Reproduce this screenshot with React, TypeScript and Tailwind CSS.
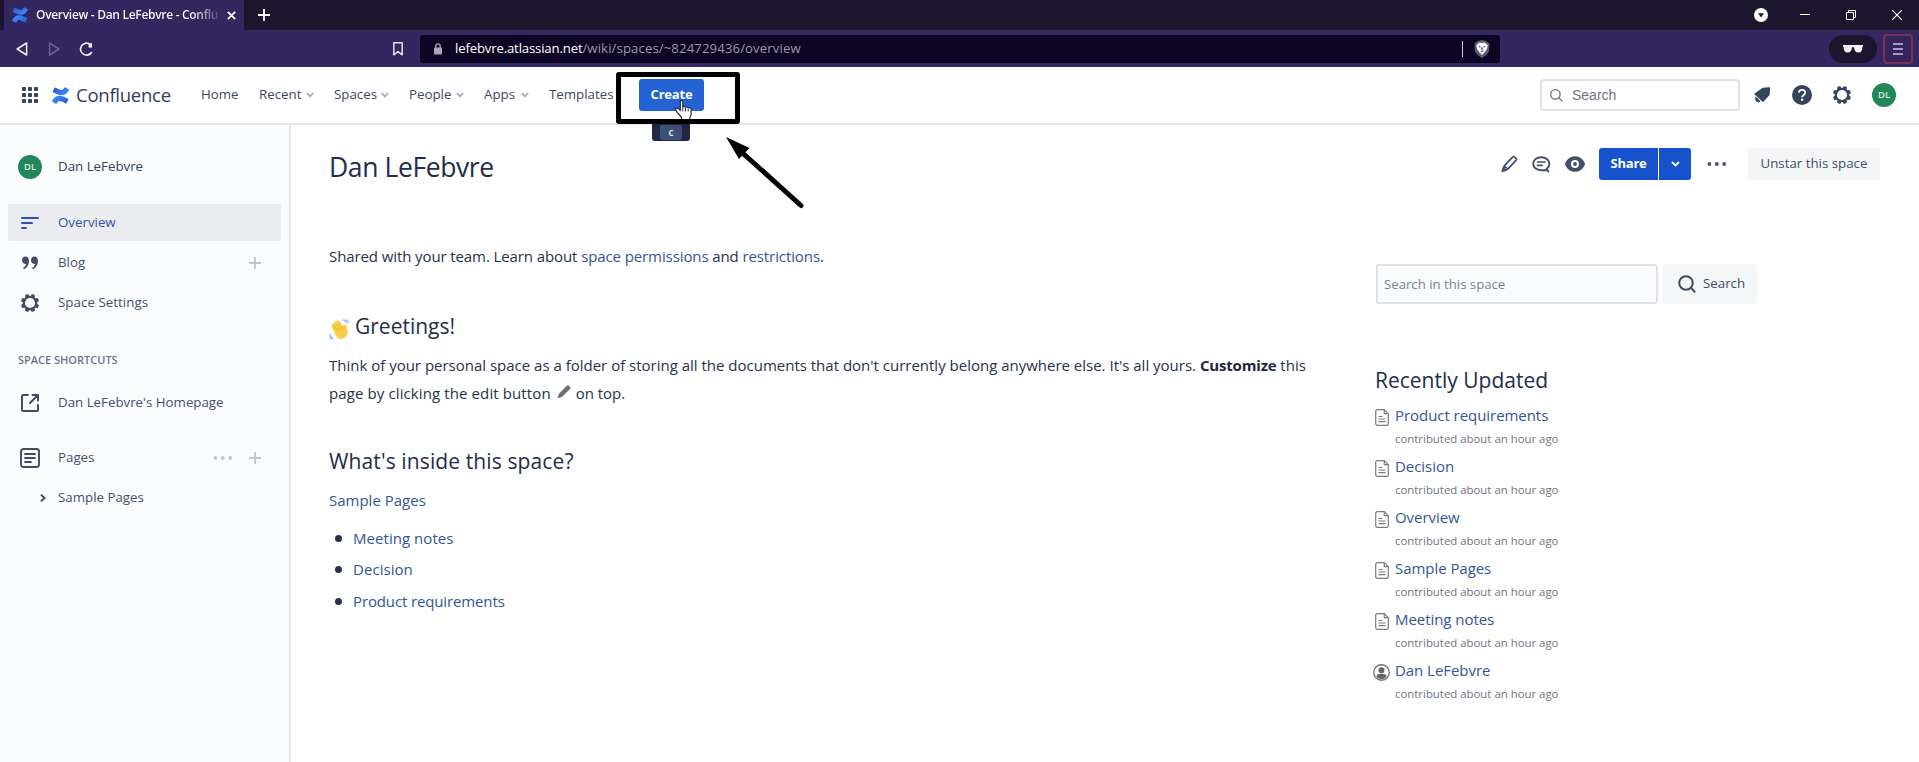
import React from "react";

const Logo = ({ id, size, className = "" }: { id: string; size: number; className?: string }) => (
  <svg width={size} height={size} viewBox="0 0 24 24" className={`shrink-0 ${className}`}>
    <defs>
      <linearGradient id={`${id}a`} x1="1" y1="1" x2="0.2" y2="0.3">
        <stop offset="0" stopColor="#1f57c4" />
        <stop offset="1" stopColor="#3c86f5" />
      </linearGradient>
      <linearGradient id={`${id}b`} x1="0" y1="0" x2="0.8" y2="0.7">
        <stop offset="0" stopColor="#1f57c4" />
        <stop offset="1" stopColor="#3c86f5" />
      </linearGradient>
    </defs>
    <path
      fill={`url(#${id}a)`}
      d="M.87 18.257c-.248.382-.53.875-.763 1.245a.764.764 0 0 0 .255 1.04l4.965 3.054a.764.764 0 0 0 1.058-.26c.199-.332.454-.763.733-1.221 1.967-3.247 3.945-2.853 7.508-1.146l4.957 2.337a.764.764 0 0 0 1.028-.382l2.364-5.346a.764.764 0 0 0-.382-1c-1.04-.49-3.08-1.46-4.965-2.367C10.94 10.977 5.15 11.255.87 18.257z"
    />
    <path
      fill={`url(#${id}b)`}
      d="M23.131 5.743c.249-.405.531-.875.764-1.25a.764.764 0 0 0-.256-1.034L18.675.404a.764.764 0 0 0-1.058.26c-.195.335-.451.763-.734 1.225-1.966 3.246-3.945 2.85-7.508 1.146L4.437.694a.764.764 0 0 0-1.027.382L1.046 6.422a.764.764 0 0 0 .382 1c1.039.49 3.085 1.466 4.965 2.374 6.76 3.27 12.54 2.99 16.738-4.053z"
    />
  </svg>
);

const Gear = ({ size = 20, className = "" }: { size?: number; className?: string }) => (
  <svg width={size} height={size} viewBox="0 0 20 20" fill="currentColor" className={className}>
    <circle cx="10" cy="10" r="6.200" fill="none" stroke="currentColor" strokeWidth="2.200" />
    {[22.5, 67.5, 112.5, 157.5, 202.5, 247.5, 292.5, 337.5].map((a) => (
      <rect key={a} x="8" y="0.9" width="4" height="3" rx="1.3" transform={`rotate(${a} 10 10)`} />
    ))}
  </svg>
);

const Avatar = () => (
  <span className="flex size-6 shrink-0 items-center justify-center rounded-full bg-[#24875a] text-[9.5px] font-semibold text-[#d5eee1]">
    DL
  </span>
);

const Plus = () => (
  <svg width="12" height="12" viewBox="0 0 12 12" stroke="#c3c5ca" strokeWidth="1.8">
    <path d="M6 0v12M0 6h12" />
  </svg>
);

const Dots = ({ className }: { className: string }) => (
  <svg width="20" height="4" viewBox="0 0 20 4" fill="currentColor" className={className}>
    <circle cx="2.4" cy="2" r="1.9" />
    <circle cx="9.8" cy="2" r="1.9" />
    <circle cx="17.2" cy="2" r="1.9" />
  </svg>
);

function TabStrip() {
  return (
    <div className="flex h-[30px] bg-[#1b162e] pl-1">
      <div className="flex w-60 items-center bg-[#34265f] pl-2">
        <Logo id="tab" size={16} />
        <span className="ml-2 w-[184px] overflow-hidden bg-gradient-to-r from-white from-85% to-white/10 bg-clip-text text-[12px] font-semibold whitespace-nowrap text-transparent">
          <span className="block w-[210px] tracking-[-0.3px]">Overview - Dan LeFebvre - Conflu</span>
        </span>
        <svg width="9" height="9" viewBox="0 0 9 9" stroke="#fff" strokeWidth="1.7" className="ml-[7px]">
          <path d="M.8.8l7.4 7.4M8.2.8L.8 8.2" />
        </svg>
      </div>
      <svg width="12" height="12" viewBox="0 0 12 12" stroke="#fff" strokeWidth="1.9" className="mt-[9px] ml-[14px]">
        <path d="M6 0v12M0 6h12" />
      </svg>
      <div className="ml-auto flex items-center pr-[17px]">
        <svg width="14" height="14" viewBox="0 0 14 14">
          <circle cx="7" cy="7" r="7" fill="#fff" />
          <path d="M4 5.2h6L7 9.6z" fill="#1b162e" />
        </svg>
        <svg width="10" height="10" viewBox="0 0 10 10" stroke="#fff" className="ml-8">
          <path d="M0 4.5h10" />
        </svg>
        <svg width="10" height="10" viewBox="0 0 10 10" stroke="#fff" fill="none" className="ml-9">
          <path d="M.5 2.5h7v7h-7zM2.5 2.5v-2h7v7h-2" />
        </svg>
        <svg width="10" height="10" viewBox="0 0 10 10" stroke="#fff" strokeWidth="1.2" className="ml-9">
          <path d="M.3.3l9.4 9.4M9.7.3L.3 9.7" />
        </svg>
      </div>
    </div>
  );
}

function AddressBar() {
  return (
    <div className="flex h-[37px] items-center bg-[#34265f]">
      <svg width="78" height="16" viewBox="0 0 78 16" fill="none" strokeWidth="1.5" strokeLinejoin="round" className="ml-4">
        <path d="M10.6 2v12L1.2 8z" stroke="#f1eff6" />
        <path d="M33.6 2v12L43 8z" stroke="#6d618f" />
        <path d="M75.8 11A6 6 0 1 1 73.300 2.800" stroke="#f1eff6" strokeWidth="1.600" />
        <path d="M72.600 2.200h3.400v4.400h-3.400z" fill="#f1eff6" />
      </svg>
      <svg width="10" height="14" viewBox="0 0 10 14" fill="none" stroke="#e4e0ee" strokeWidth="1.5" className="ml-[299px]">
        <path d="M.8.8h8.4v12L5 9.6.8 12.8z" strokeLinejoin="round" />
      </svg>
      <div className="ml-[17px] flex h-7 w-[1080px] items-center rounded-[3px] bg-[#0c0524] pl-[14px]">
        <svg width="8" height="12" viewBox="0 0 8 12" fill="#a9a6b5">
          <rect y="4.6" width="8" height="6.8" rx=".8" />
          <path d="M1.8 5V3a2.200 2.200 0 0 1 4.400 0v2" fill="none" stroke="#a9a6b5" strokeWidth="1.300" />
        </svg>
        <span className="ml-[13px] text-[13.200px] whitespace-nowrap text-[#9a97a8]">
          <span className="tracking-[-0.17px] text-white">lefebvre.atlassian.net</span>
          <span className="tracking-[0.1px]">/wiki/spaces/~824729436/overview</span>
        </span>
        <span className="ml-auto h-4 w-px bg-[#c9c7d2]" />
        <svg width="16" height="18" viewBox="0 0 16 18" className="mr-[10px] ml-[11px]">
          <path d="M8 0l4 .9L15.500 3.500l-.6 7.500c-.3 2-3.500 5-6.900 7-3.400-2-6.600-5-6.900-7L.5 3.500 4 .9z" fill="#5f5c70" />
          <path d="M5.300 2.500L8 3l2.700-.5 3 2.700-.7 3.700-2.300 3.300L8 15l-2.700-2.800L3 8.900l-.7-3.700z" fill="#f4f4f8" />
          <path d="M4.300 6l2.700.7-1.100 1.100zM11.700 6l-2.700.7 1.100 1.100zM7.200 7.500h1.600L8.500 10h-1zM6.300 11L8 12.200 9.700 11 8 10.600z" fill="#4a475c" />
        </svg>
      </div>
      <div className="ml-auto flex h-7 w-12 items-center justify-center rounded-full bg-[#1b162e]">
        <svg width="20" height="8" viewBox="0 0 20 8" fill="#f3f1f8">
          <path d="M0 0h20v1.600h-.6c0 4-1.200 6-4 6-2.700 0-4-2-4.400-5.300h-2C8.600 5.600 7.300 7.600 4.600 7.600c-2.800 0-4-2-4-6H0z" />
        </svg>
      </div>
      <div className="mr-1.5 ml-1.5 flex h-[30px] w-[30px] items-center justify-center rounded-[4px] border-2 border-[#7d3057] bg-[#35255c]">
        <svg width="10" height="12" viewBox="0 0 10 12" stroke="#cdbcf0" strokeWidth="1.7">
          <path d="M0 1h10M0 6h10M0 11h10" />
        </svg>
      </div>
    </div>
  );
}

const Chevron = ({ className = "" }: { className?: string }) => (
  <svg width="8" height="6" viewBox="0 0 8 6" fill="none" stroke="#a5abb5" strokeWidth="1.8" className={className}>
    <path d="M.8 1L4 4.400 7.200 1" />
  </svg>
);

const NavItem = ({ label, className, arrow = true }: { label: string; className: string; arrow?: boolean }) => (
  <span className={`flex items-center whitespace-nowrap ${className}`}>
    {label}
    {arrow && <Chevron className="ml-auto" />}
  </span>
);

function AppHeader() {
  return (
    <header className="relative flex h-[58px] shrink-0 items-center border-b-2 border-[#e4e5e8] bg-white text-[13.300px] font-medium text-[#3b4860]">
      <svg width="16" height="16" viewBox="0 0 16 16" fill="#34435e" className="ml-[22px]">
        {[0, 6, 12].map((y) => [0, 6, 12].map((x) => <rect key={`${x}-${y}`} x={x} y={y} width="4" height="4" rx=".8" />))}
      </svg>
      <Logo id="app" size={17} className="ml-[14px]" />
      <span className="ml-[7px] w-[125px] text-[18.500px] font-normal tracking-[-0.25px] text-[#2f3d58]">Confluence</span>
      <NavItem label="Home" className="w-[58px]" arrow={false} />
      <NavItem label="Recent" className="mr-5 w-[55px]" />
      <NavItem label="Spaces" className="mr-5 w-[55px]" />
      <NavItem label="People" className="mr-5 w-[55px]" />
      <NavItem label="Apps" className="mr-5 w-[45px]" />
      <NavItem label="Templates" className="w-[90px]" arrow={false} />
      <button className="flex h-8 w-[65px] items-center justify-center rounded-[3px] bg-[#2563d4] text-[13px] font-bold tracking-[-0.2px] text-white">
        Create
      </button>

      <div className="ml-auto flex h-8 w-[200px] items-center rounded-[4px] border-2 border-[#dfe1e6] bg-white pl-2">
        <svg width="13" height="13" viewBox="0 0 13 13" fill="none" stroke="#6a7078" strokeWidth="1.300">
          <circle cx="5.400" cy="5.400" r="4.700" />
          <path d="M8.800 8.800l3.600 3.600" />
        </svg>
        <span className="ml-[9px] font-['Liberation_Sans',sans-serif] text-[14px] font-normal text-[#70757d]">Search</span>
      </div>
      <svg width="17" height="16" viewBox="0 0 17 16" fill="#36455f" className="ml-[14px]">
        <path d="M8.600.8L15 .2c.9-.1 1.300.5 1.200 1.200l-.6 6.500-5.900 6.600c-.4.400-1 .400-1.400.1L.9 7.700C.4 7.300.5 6.700 1 6.300z" />
        <path d="M1.800 9.600l4.700 4.700c-1.500 1.300-3.500 1.100-4.400 0-1-.9-1.300-3-.3-4.700z" />
      </svg>
      <svg width="20" height="20" viewBox="0 0 20 20" className="ml-[21px]">
        <circle cx="10" cy="10" r="10" fill="#34435e" />
        <path d="M6.900 7.800c0-1.800 1.300-3 3.100-3s3.200 1.200 3.200 2.800c0 1.400-.8 2-1.700 2.700-.9.600-1.400 1-1.400 2" fill="none" stroke="#fff" strokeWidth="1.800" />
        <circle cx="10.100" cy="14.800" r="1.200" fill="#fff" />
      </svg>
      <Gear size={20} className="ml-5 text-[#36455f]" />
      <span className="mr-[23px] ml-5"><Avatar /></span>

      <div className="absolute top-[57px] left-[652px] flex h-[17px] w-[38px] items-center justify-center rounded-b-[3px] bg-[#1f2745]">
        <span className="flex h-[15px] w-[22px] items-center justify-center rounded-[2px] bg-[#3d4f72] text-[8px] font-bold text-[#dfe6f2]">C</span>
      </div>
      <svg width="19" height="22" viewBox="0 0 19 22" className="absolute top-[33px] left-[674px]">
        <path
          d="M6.300 1.500c0-1.500 2.500-1.500 2.500 0v6c0-1.300 2.700-1.200 2.700.3 0-1.200 2.700-1.100 2.700.5 0-1.100 2.900-1 2.900.7v5c0 1.800-1.300 2.500-1.300 4v2.500H7.600v-2.500c0-1.500-2.900-3.400-4.300-5.600-.9-1.400-2.600-3.200-1.300-4.100 1.400-1 3 .7 4.300 1.800z"
          fill="#fff"
          stroke="#222b45"
          strokeWidth="1.200"
        />
        <path d="M8.800 7.500v4M11.500 8v3.500M14.200 8.500v3" stroke="#222b45" strokeWidth="1" />
      </svg>
      <div className="absolute top-[5px] left-[616px] h-[52px] w-[124px] rounded-[3px] border-[5px] border-black" />
      <svg width="84" height="78" viewBox="0 0 84 78" className="absolute top-[67px] left-[723px]">
        <path d="M19 18.500L78 71.500" stroke="#000" strokeWidth="5" strokeLinecap="round" />
        <path d="M3 3L26.500 14 16 25z" />
      </svg>
    </header>
  );
}

const rowText = "text-[13.300px] text-[#45506a] whitespace-nowrap";

function Sidebar() {
  return (
    <aside className="flex w-[291px] shrink-0 flex-col border-r-2 border-[#e6e8ec] bg-[#fafbfd] px-2 pt-6 text-[#454b60]">
      <div className="flex h-9 items-center pl-[10px]">
        <Avatar />
        <span className="ml-4 text-[13.300px] font-medium text-[#36425a]">Dan LeFebvre</span>
      </div>
      <div className="mt-[19px] flex h-[37px] items-center rounded-[2px] bg-[#ebecf0] pl-[13px]">
        <svg width="18" height="12" viewBox="0 0 18 12" stroke="#2f55a8" strokeWidth="2" strokeLinecap="round">
          <path d="M1 1h16M1 6h10M1 11h4" />
        </svg>
        <span className="ml-[19px] text-[13.300px] text-[#2d53a8]">Overview</span>
      </div>
      <div className="mt-0.5 flex h-10 items-center pl-[14px]">
        <svg width="17" height="14" viewBox="0 0 17 14" fill="currentColor">
          <path d="M3.400.6C5.600.6 7 2.300 7 4.800c0 4-2.300 7.400-5.200 8.500l-.7-1.300c1.700-.9 2.800-2.400 3-4.300-.3.100-.6.200-1 .2C1.300 7.900 0 6.300 0 4.300 0 2.200 1.400.6 3.400.6z" />
          <path d="M12.400.6C14.600.6 16 2.300 16 4.800c0 4-2.300 7.400-5.200 8.500l-.7-1.300c1.700-.9 2.800-2.400 3-4.300-.3.100-.6.200-1 .2-1.800 0-3.100-1.600-3.100-3.600C9 2.200 10.400.6 12.400.6z" />
        </svg>
        <span className={`ml-[19px] ${rowText}`}>Blog</span>
        <span className="mr-5 ml-auto"><Plus /></span>
      </div>
      <div className="flex h-10 items-center pl-3">
        <Gear size={20} />
        <span className={`ml-[18px] tracking-[0.05px] ${rowText}`}>Space Settings</span>
      </div>
      <div className="mt-[27px] flex h-[20px] items-center pl-[10px] text-[11px] font-semibold text-[#6b7588]">
        <span>SPACE SHORTCUTS</span>
      </div>
      <div className="mt-[13px] flex h-10 items-center pl-[13px]">
        <svg width="18" height="18" viewBox="0 0 18 18" fill="none" stroke="currentColor" strokeWidth="2" strokeLinecap="round" strokeLinejoin="round">
          <path d="M7 1H2.500Q1 1 1 2.500v13Q1 17 2.500 17h13q1.500 0 1.500-1.500V11M11.500 1H17v5.500M17 1L9 9" />
        </svg>
        <span className={`ml-[19px] ${rowText}`}>Dan LeFebvre's Homepage</span>
      </div>
      <div className="mt-[15px] flex h-10 items-center pl-3">
        <svg width="20" height="20" viewBox="0 0 20 20" fill="none" stroke="currentColor" strokeWidth="1.900" strokeLinecap="round">
          <rect x="1" y="1" width="18" height="18" rx="2.500" />
          <path d="M5 6h10M5 10h10M5 14h6" />
        </svg>
        <span className={`ml-[18px] ${rowText}`}>Pages</span>
        <Dots className="ml-auto text-[#c3c5ca]" />
        <span className="mr-5 ml-4"><Plus /></span>
      </div>
      <div className="flex h-10 items-center pl-8">
        <svg width="6" height="8" viewBox="0 0 6 8" fill="none" stroke="currentColor" strokeWidth="1.900">
          <path d="M1 .8L4.600 4 1 7.200" />
        </svg>
        <span className={`ml-3 ${rowText}`}>Sample Pages</span>
      </div>
    </aside>
  );
}

const Link = ({ children, className = "" }: { children: React.ReactNode; className?: string }) => (
  <a className={`text-[#34559a] ${className}`}>{children}</a>
);

function Article() {
  return (
    <article className="flex w-[1046px] shrink-0 flex-col text-[15px] text-[#27334c]">
      <h1 className="mt-[22px] h-10 text-[26.500px] leading-[40px] tracking-[-0.400px] text-[#222e4a]">Dan LeFebvre</h1>
      <p className="mt-[55px] leading-[28px] tracking-[-0.100px]">
        Shared with your team. Learn about <Link>space permissions</Link> and <Link>restrictions</Link>.
      </p>
      <h2 className="mt-[41px] flex h-8 items-center text-[21px] text-[#222e4a]">
        <svg width="21" height="21" viewBox="0 0 21 21" className="mt-1 mr-[5px]">
          <path d="M3.200 7.200c-.5-1.100 1-1.900 1.700-.9L5.200 5c-.4-1.200 1.200-1.900 1.900-.8l.9-1c.2-1.100 1.500-1.200 2-.2l4.200 6.200c.1-1.500.2-3 1.500-3 1.300.1 1.600 1.800 1.900 3.600.5 2.700.8 5.700-1.700 7.900-2.400 2-6 2-7.900-.7z" fill="#f9cf4a" stroke="#f9cf4a" strokeWidth="1.600" strokeLinejoin="round" />
          <path d="M5.500 7l4.200 6M7.500 5.200l4.200 6M10 4.500l3.400 5" stroke="#e7a92c" strokeWidth=".8" />
          <path d="M13.500.8c2 .3 3.200 1.300 3.800 3.200M15.800.6c2.200.4 3.200 1.500 3.600 3.800M.8 14.500c.1 2.200 1.200 3.600 3.200 4.400M.6 17.500c.5 1.600 1.500 2.400 3.200 2.800" fill="none" stroke="#8dbdf0" strokeWidth="1.100" />
        </svg>
        <span>Greetings!</span>
      </h2>
      <p className="mt-2 w-[990px] leading-[28px]">
        <span className="tracking-[-0.005px]">
          Think of your personal space as a folder of storing all the documents that don't currently belong anywhere else. It's all yours.{" "}
        </span>
        <b className="tracking-[-0.180px] text-[#1c2740]">Customize</b>
        <span> this</span>
        <br />
        <span className="tracking-[0.110px]">page by clicking the edit button </span>
        <svg width="14" height="14" viewBox="0 0 14 14" fill="#6b6b70" className="mr-[1px] mb-1.5 ml-[2px] inline">
          <path d="M9.800.8q1-1 2 0l1.200 1.200q1 1 0 2L4.800 12.100.6 13.300l1.200-4.300z" />
        </svg>
        <span> on top.</span>
      </p>
      <h2 className="mt-[38px] h-8 text-[21px] leading-[32px] tracking-[0.120px] text-[#222e4a]">What's inside this space?</h2>
      <p className="mt-[9px] leading-[28px]"><Link>Sample Pages</Link></p>
      <ul className="mt-2 flex flex-col">
        {["Meeting notes", "Decision", "Product requirements"].map((t) => (
          <li key={t} className="flex h-[31.500px] items-center">
            <span className="mt-[1px] ml-1.5 size-[7px] rounded-full bg-[#27304a]" />
            <Link className={t.length > 15 ? "ml-[11px] tracking-[-0.130px]" : "ml-[11px] tracking-[0.050px]"}>{t}</Link>
          </li>
        ))}
      </ul>
    </article>
  );
}

const updates = ["Product requirements", "Decision", "Overview", "Sample Pages", "Meeting notes", "Dan LeFebvre"];

function PageActions() {
  return (
    <div className="flex h-8 items-center pl-[126px] text-[13.300px] font-medium text-[#44506a]">
      <svg width="17" height="18" viewBox="0 0 17 18" fill="none" stroke="currentColor" strokeWidth="1.700" strokeLinejoin="round">
        <path d="M11.600 2.200q1-1.100 2-.1l1.300 1.200q1.100 1 .1 2.100L6.800 14.200l-3.600-3.300zM3.200 10.900L1.500 16l5.300-1.800" />
        <path d="M1.300 16.300l1.200-3.200 2.100 2z" fill="currentColor" />
      </svg>
      <svg width="19" height="17" viewBox="0 0 19 17" fill="none" stroke="currentColor" strokeWidth="1.900" strokeLinecap="round" className="ml-[14px]">
        <path d="M16.400 15.500l-1.700-2.600c1.700-1.200 2.600-2.900 2.600-4.900C17.300 4.200 14.200 1.200 9.300 1.200S1.200 4.200 1.200 7.700s3.200 6.500 8.100 6.500h5.400" />
        <path d="M5.500 6h7.500M5.500 9.400H10" strokeWidth="1.700" />
      </svg>
      <svg width="20" height="16" viewBox="0 0 20 16" className="ml-[14px]">
        <path d="M0 8c1.500-5 5.500-7.800 10-7.800S18.500 3 20 8c-1.500 5-5.500 7.800-10 7.800S1.500 13 0 8z" fill="currentColor" />
        <circle cx="10" cy="8" r="4" fill="#fff" />
        <circle cx="10" cy="8" r="1.900" fill="currentColor" />
      </svg>
      <div className="ml-[14px] flex h-8 gap-px text-[13px] font-bold tracking-[-0.200px] text-white">
        <button className="w-[59px] rounded-l-[3px] bg-[#1552cc]">Share</button>
        <button className="flex w-8 items-center justify-center rounded-r-[3px] bg-[#1552cc]">
          <svg width="9" height="6" viewBox="0 0 9 6" fill="none" stroke="#fff" strokeWidth="1.900"><path d="M1 1l3.500 3.500L8 1" /></svg>
        </button>
      </div>
      <Dots className="ml-4 text-[#4a5468]" />
      <button className="ml-[21px] h-8 w-[132px] rounded-[3px] bg-[#f4f5f7] whitespace-nowrap">Unstar this space</button>
    </div>
  );
}

const PageIcon = () => (
  <svg width="14" height="17" viewBox="0 0 14 17" fill="none" stroke="#7d7d80" strokeWidth="1.200">
    <path d="M2.500.7h6.800l4 4v10q0 1.600-1.600 1.600H2.500Q.7 16.300.7 14.500v-12Q.7.7 2.500.7z" />
    <path d="M9.300.7v4h4M3.500 7.500h4M3.500 10h7M3.500 12.700h7" />
  </svg>
);

const PersonIcon = () => (
  <svg width="17" height="17" viewBox="0 0 17 17" className="ml-[-2px]">
    <circle cx="8.500" cy="8.500" r="7.700" fill="none" stroke="#77777a" strokeWidth="1.400" />
    <circle cx="8.500" cy="6.200" r="3" fill="#666669" />
    <path d="M3.500 12.800c0-2 1.300-3 5-3s5 1 5 3c-1.300 1.600-3 2.400-5 2.400s-3.700-.8-5-2.400z" fill="#666669" />
  </svg>
);

function RightColumn() {
  return (
    <section className="flex w-[544px] flex-col pt-[23px]">
      <PageActions />
      <div className="mt-[84px] flex h-10 items-center pl-[1px]">
        <div className="flex h-10 w-[282px] items-center rounded-[3px] border-2 border-[#dfe1e6] bg-[#fafbfd] pt-[2px] pl-1.5 text-[13.200px] text-[#7a8392]">
          Search in this space
        </div>
        <button className="ml-[5px] flex h-10 w-[94px] items-center rounded-[3px] bg-[#f5f6f8] pl-[15px] text-[13.300px] font-medium text-[#434e66]">
          <svg width="18" height="18" viewBox="0 0 18 18" fill="none" stroke="currentColor" strokeWidth="2">
            <circle cx="8" cy="8" r="6.800" />
            <path d="M12.800 12.800l4.400 4.400" />
          </svg>
          <span className="ml-[7px]">Search</span>
        </button>
      </div>
      <h2 className="mt-[60px] h-8 text-[21px] leading-[32px] text-[#222e4a]">Recently Updated</h2>
      <ul className="mt-[7px] flex flex-col">
        {updates.map((t) => (
          <li key={t} className="flex h-[51px] flex-col">
            <div className="flex h-6 items-center">
              <span className="mt-1 w-5">{t === "Dan LeFebvre" ? <PersonIcon /> : <PageIcon />}</span>
              <Link className="text-[15px] tracking-[-0.050px]">{t}</Link>
            </div>
            <span className="ml-5 text-[11.400px] leading-6 text-[#707680]">contributed about an hour ago</span>
          </li>
        ))}
      </ul>
    </section>
  );
}

export default function App() {
  return (
    <div className="flex h-[762px] w-[1919px] flex-col overflow-hidden bg-[#fefefe] font-['Open_Sans','Noto_Sans',sans-serif]">
      <TabStrip />
      <AddressBar />
      <AppHeader />
      <div className="flex flex-1">
        <Sidebar />
        <main className="flex flex-1 pl-[38px]">
          <Article />
          <RightColumn />
        </main>
      </div>
    </div>
  );
}
